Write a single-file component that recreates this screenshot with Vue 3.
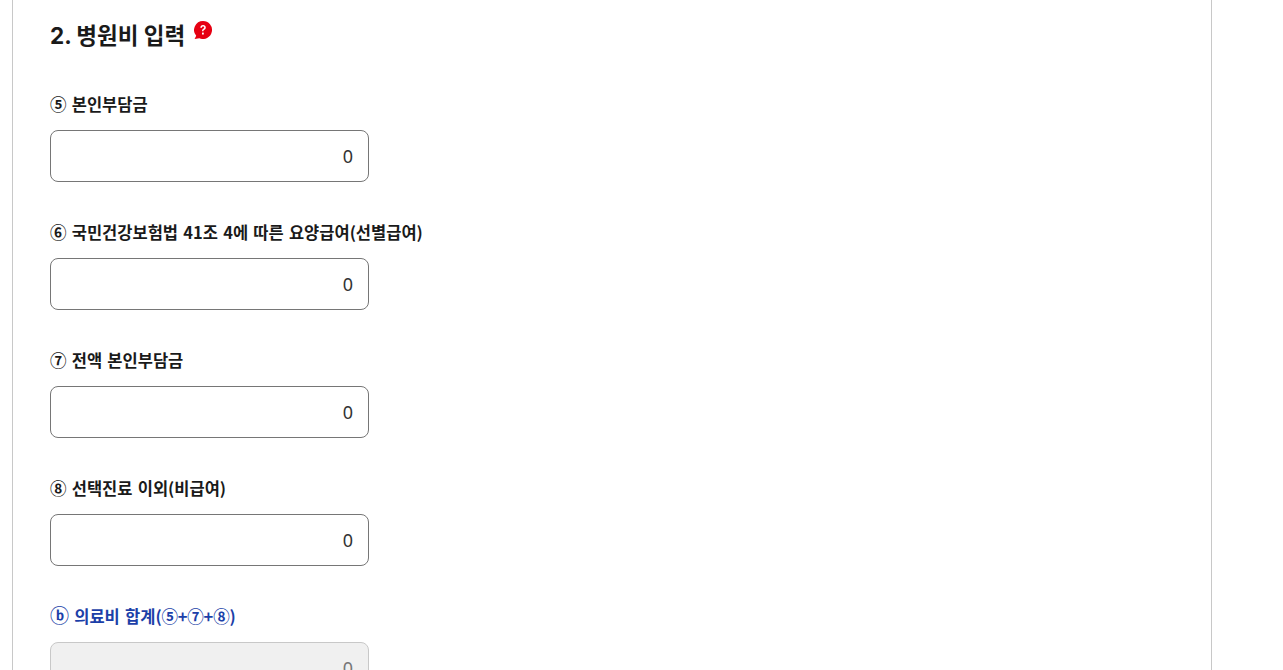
<script setup>
const fields = [
  { label: '⑤ 본인부담금' },
  { label: '⑥ 국민건강보험법 41조 4에 따른 요양급여(선별급여)' },
  { label: '⑦ 전액 본인부담금' },
  { label: '⑧ 선택진료 이외(비급여)' },
  { mark: 'ⓑ', label: ' 의료비 합계', sum: '(⑤+⑦+⑧)', total: true },
]
</script>

<template>
  <div class="page">
    <section class="panel">
      <h3 class="title">
        2. 병원비 입력
        <svg class="help" viewBox="0 0 18 18" width="18" height="18">
          <path d="M9 0a9 9 0 1 1-3.6 17.25L0.6 18l1.6-3.2A9 9 0 0 1 9 0z" fill="#e60012" />
          <path d="M6.3 6.8c0-1.7 1.2-2.8 2.8-2.8s2.7 1 2.7 2.4c0 1.2-.7 1.8-1.4 2.3-.6.4-.9.7-.9 1.5H8c0-1.3.4-1.9 1.2-2.5.6-.4 1-.7 1-1.2 0-.6-.4-1-1.1-1-.7 0-1.1.5-1.2 1.3z" fill="#fff" />
          <rect x="8" y="11.6" width="1.8" height="1.9" fill="#fff" />
        </svg>
      </h3>
      <div v-for="f in fields" :key="f.label" class="field">
        <label class="label" :class="{ blue: f.total }"><span v-if="f.mark" class="mark">{{ f.mark }}</span>{{ f.label }}<span v-if="f.sum" class="sum">{{ f.sum }}</span></label>
        <input class="input" type="text" value="0" :disabled="f.total" />
      </div>
    </section>
  </div>
</template>

<style scoped>
.page {
  height: 670px;
  overflow: hidden;
  padding-left: 12px;
  box-sizing: border-box;
}

.panel {
  width: 1200px;
  box-sizing: border-box;
  height: 800px;
  border-left: 1px solid #c8c8c8;
  border-right: 1px solid #c8c8c8;
  padding: 20px 37px 0;
  font-family: "Noto Sans CJK KR", "Noto Sans", sans-serif;
  color: #1a1a1a;
}

.title {
  margin: 0;
  display: flex;
  align-items: flex-start;
  font-family: Inter, "Noto Sans CJK KR", sans-serif;
  font-size: 22.5px;
  font-weight: 700;
  line-height: 32px;
  gap: 9px;
}

.help {
  margin-top: 1px;
}

.field {
  display: flex;
  flex-direction: column;
  align-items: flex-start;
  margin-top: 38px;
}

.title + .field {
  margin-top: 40px;
}

.label {
  font-size: 16.5px;
  font-weight: 700;
  line-height: 24px;
  word-spacing: 1.5px;
  margin-bottom: 14px;
}

.label.blue {
  color: #1c3fa8;
}

.mark {
  font-size: 19px;
  line-height: 1;
}

.sum {
  letter-spacing: -0.2px;
}

.input {
  width: 319px;
  height: 52px;
  box-sizing: border-box;
  border: 1px solid #767676;
  border-radius: 8px;
  padding: 0 15px;
  text-align: right;
  font-family: "Noto Sans", "Noto Sans CJK KR", sans-serif;
  font-size: 18px;
  color: #333;
  background: #fff;
  outline: none;
}

.input:disabled {
  background: #f0f0f0;
  border-color: #c8c8c8;
  color: #777;
}
</style>
